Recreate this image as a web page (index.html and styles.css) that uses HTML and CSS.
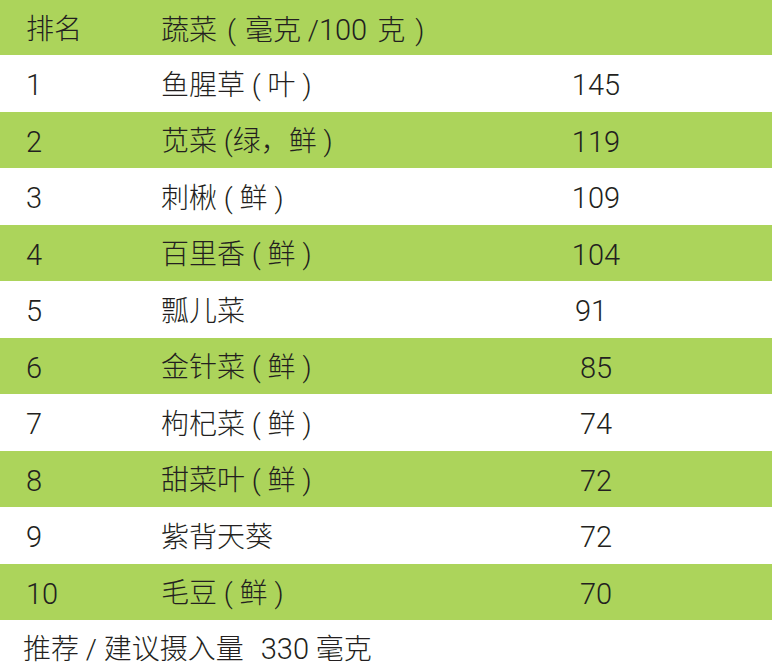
FILE: index.html
```html
<!DOCTYPE html>
<html lang="zh">
<head>
<meta charset="utf-8">
<title>蔬菜排名</title>
<link rel="stylesheet" href="styles.css">
</head>
<body>
<div class="table">
  <div class="row head">
    <div class="rank cjk">排名</div>
    <div class="name wide">蔬菜<span class="pl">(</span>毫克 /<span class="digits">100</span><span class="ke">克</span><span class="pr">)</span></div>
  </div>
  <div class="row">
    <div class="rank">1</div><div class="name">鱼腥草 ( 叶 )</div><div class="num">145</div>
  </div>
  <div class="row alt">
    <div class="rank">2</div><div class="name">苋菜 (绿，鲜 )</div><div class="num">119</div>
  </div>
  <div class="row">
    <div class="rank">3</div><div class="name">刺楸 ( 鲜 )</div><div class="num">109</div>
  </div>
  <div class="row alt">
    <div class="rank">4</div><div class="name">百里香 ( 鲜 )</div><div class="num">104</div>
  </div>
  <div class="row">
    <div class="rank">5</div><div class="name">瓢儿菜</div><div class="num num-left">91</div>
  </div>
  <div class="row alt">
    <div class="rank">6</div><div class="name">金针菜 ( 鲜 )</div><div class="num">85</div>
  </div>
  <div class="row">
    <div class="rank">7</div><div class="name">枸杞菜 ( 鲜 )</div><div class="num">74</div>
  </div>
  <div class="row alt">
    <div class="rank">8</div><div class="name">甜菜叶 ( 鲜 )</div><div class="num">72</div>
  </div>
  <div class="row">
    <div class="rank">9</div><div class="name">紫背天葵</div><div class="num">72</div>
  </div>
  <div class="row alt">
    <div class="rank">10</div><div class="name">毛豆 ( 鲜 )</div><div class="num">70</div>
  </div>
  <div class="foot"><span class="foot-text">推荐 / 建议摄入量<span class="gap"></span><span class="digits">330</span> 毫克</span></div>
</div>
</body>
</html>
```

FILE: styles.css
```css
html, body {
  margin: 0;
  padding: 0;
  background: #ffffff;
}

.table {
  width: 772px;
  font-family: Roboto, "Noto Sans CJK SC", sans-serif;
  font-size: 28px;
  font-weight: 300;
  color: #231f20;
}

.row {
  display: grid;
  grid-template-columns: 161px 385px 100px 1fr;
  align-items: center;
  height: 56.5px;
  line-height: 1;
}

.row > div {
  padding-top: 5px;
}

.row.head {
  height: 55px;
  background: #acd45b;
}

.row.alt {
  background: #acd45b;
}

.rank {
  padding-left: 26px;
  font-size: 29px;
}

.rank.cjk {
  font-size: 28px;
}

.name {
  white-space: nowrap;
}

.pl {
  margin: 0 9px 0 10px;
}

.ke {
  margin-left: 10px;
}

.pr {
  margin-left: 10px;
}

.wide {
  grid-column: 2 / 5;
}

.num {
  text-align: center;
  font-size: 29px;
}

.num-left {
  padding-right: 10px;
}

.digits {
  font-size: 29px;
}

.foot {
  height: 50px;
  padding-left: 23px;
  padding-top: 4px;
  display: flex;
  align-items: center;
  box-sizing: border-box;
}

.foot-text {
  white-space: nowrap;
}

.gap {
  display: inline-block;
  width: 17px;
}
```
